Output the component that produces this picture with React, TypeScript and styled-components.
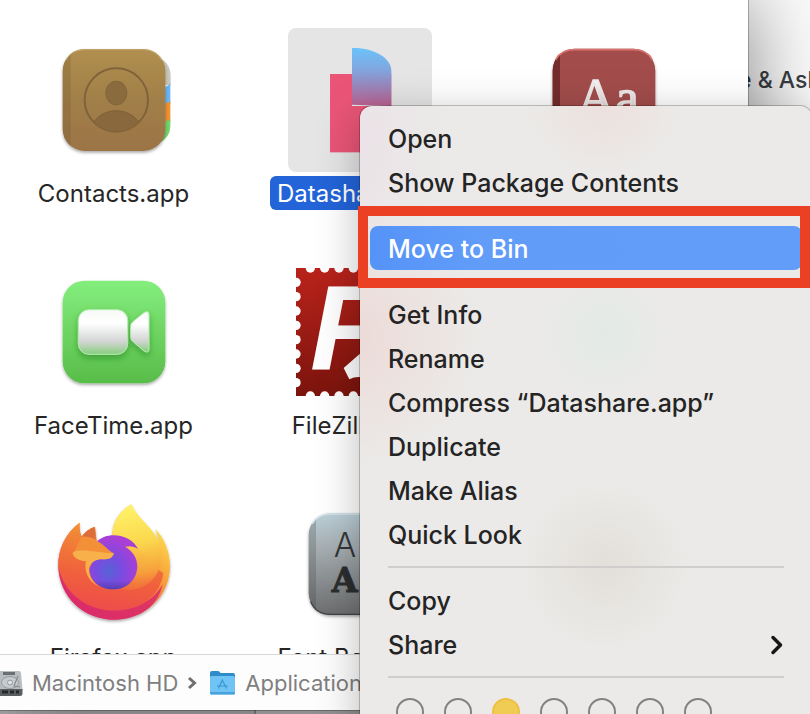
import React from "react";
import styled, { createGlobalStyle, css } from "styled-components";

const GlobalStyle = createGlobalStyle`
  * { box-sizing: border-box; }
  body {
    margin: 0;
    overflow: hidden;
    background: #f5f5f5;
    color: #262626;
    font-family: Inter, "Liberation Sans", sans-serif;
  }
  button {
    margin: 0;
    padding: 0;
    border: 0;
    background: none;
    color: inherit;
    font: inherit;
    text-align: left;
    cursor: default;
  }
`;

const Desktop = styled.main`
  position: relative;
  display: flex;
  height: 100vh;
  overflow: hidden;
`;

const FrontColumn = styled.div`
  position: relative;
  z-index: 1;
  flex: 1;
  min-width: 0;
  display: flex;
  flex-direction: column;
`;

const FinderWindow = styled.section`
  position: relative;
  flex: 1;
  min-height: 0;
  display: flex;
  flex-direction: column;
  background: #fff;
  box-shadow: 0 0 0 1px rgba(0, 0, 0, 0.25), 0 0 80px rgba(0, 0, 0, 0.5);
`;

const BackStrip = styled.div`
  display: flex;
  height: 4px;
  background: #bdbdbd;
`;

const BackStripPane = styled.div`
  width: 256px;
  border-right: 2px solid #8a8a8f;
  background: #b2b2b2;
`;

const BackWindow = styled.aside`
  width: 62px;
  overflow: hidden;
  background: #fcfcfc;
`;

const BackTitle = styled.p`
  margin: 64px 0 0 -10px;
  font-size: 23px;
  line-height: 32px;
  font-weight: 550;
  white-space: nowrap;
  color: #3b3f44;
`;

const IconGrid = styled.div`
  flex: 1;
  min-height: 0;
  overflow: hidden;
  display: grid;
  grid-template-columns: repeat(3, 1fr);
  grid-auto-rows: 232px;
  margin: 0 19px 0 -9px;
  padding-top: 28px;
`;

const FileButton = styled.button`
  display: flex;
  flex-direction: column;
  align-items: center;
  gap: 4px;
`;

const Tile = styled.span<{ $selected?: boolean }>`
  display: block;
  width: 144px;
  height: 144px;
  padding: 8px;
  border-radius: 8px;
  background: ${(p) => (p.$selected ? "#e5e5e5" : "transparent")};

  svg {
    display: block;
    width: 128px;
    height: 128px;
    overflow: visible;
  }
`;

const FileLabel = styled.span<{ $selected?: boolean }>`
  padding: 2px 8px 0 7px;
  border-radius: 6px;
  font-size: 24px;
  line-height: 32px;
  white-space: nowrap;
  ${(p) =>
    p.$selected &&
    css`
      background: #2364d9;
      color: #fff;
    `}
`;

const PathBar = styled.nav`
  display: flex;
  align-items: center;
  height: 56px;
  border-top: 1px solid #d9d9d9;
  background: #fdfdfd;
  color: #7f7f7f;
  overflow: hidden;
`;

const PathButton = styled.button`
  display: flex;
  align-items: center;
  gap: 9px;
  font-size: 22px;
  line-height: 32px;
  white-space: nowrap;

  svg { flex: none; }
`;

const PathChevron = styled.svg`
  flex: none;
  margin: 0 12px 0 9px;
`;

const ContextMenu = styled.div`
  position: absolute;
  z-index: 2;
  top: 106px;
  left: 360px;
  right: -2px;
  padding: 10px;
  border-radius: 12px;
  color: #242424;
  background:
    radial-gradient(circle at 244px -10px, rgba(240, 190, 185, 0.25), transparent 80px),
    radial-gradient(ellipse 130px 130px at -10px 230px, rgba(240, 180, 175, 0.3), transparent),
    radial-gradient(ellipse 110px 160px at -20px 30px, rgba(235, 205, 230, 0.3), transparent),
    radial-gradient(circle at 245px 228px, rgba(215, 235, 225, 0.4), transparent 64px),
    radial-gradient(circle at 245px 460px, rgba(205, 195, 180, 0.28), transparent 84px),
    #ebeae8;
  box-shadow: 0 0 0 1px rgba(0, 0, 0, 0.22), 0 10px 44px rgba(0, 0, 0, 0.28);
`;

const MenuItem = styled.button<{ $active?: boolean }>`
  display: flex;
  align-items: center;
  justify-content: space-between;
  width: 100%;
  height: 44px;
  padding: 2px 18px 0;
  border-radius: 8px;
  font-size: 25px;
  line-height: 32px;
  font-weight: 450;
  white-space: nowrap;
  ${(p) =>
    p.$active &&
    css`
      background: linear-gradient(90deg, #5593f7, #619cf9 25%, #639dfa);
      color: #fff;
      font-weight: 500;
    `}
`;

const Divider = styled.hr`
  height: 2px;
  margin: 10px 18px;
  border: 0;
  background: #cfcecc;
`;

const Spacer = styled.div`
  height: 22px;
`;

const Callout = styled.div`
  position: relative;

  &::after {
    content: "";
    position: absolute;
    inset: -20px -8px -18px -12px;
    border: 10px solid #ec4025;
    pointer-events: none;
  }
`;

const TagRow = styled.div`
  display: flex;
  gap: 20px;
  padding: 10px 26px;
`;

const TagButton = styled.button<{ $fill?: string; $ring: string }>`
  width: 28px;
  height: 28px;
  border: 2px solid ${(p) => p.$ring};
  border-radius: 50%;
  background: ${(p) => p.$fill ?? "transparent"};
`;

const ContactsIcon = () => (
  <svg viewBox="60 48 384 384" aria-hidden="true">
    <defs>
      <linearGradient id="ct-cover" x1="0" y1="0" x2="0" y2="1">
        <stop offset="0" stopColor="#b08f50" />
        <stop offset="0.5" stopColor="#a17f48" />
        <stop offset="1" stopColor="#9c7446" />
      </linearGradient>
      <filter id="soft" x="-20%" y="-20%" width="140%" height="140%">
        <feDropShadow dx="0" dy="5" stdDeviation="5" floodOpacity="0.35" />
      </filter>
      <clipPath id="ct-ring"><circle cx="259" cy="240" r="94" /></clipPath>
    </defs>
    <path d="M370 110 Q422 118 422 170 V196 H370Z" fill="#c9c6bd" />
    <path d="M370 200 Q415 206 421 188 V252 H370Z" fill="#69b4f5" />
    <path d="M370 250 Q415 254 421 242 V306 H370Z" fill="#f1912f" />
    <path d="M370 304 Q415 308 421 296 V320 Q420 350 390 368Z" fill="#72d46c" />
    <rect x="98" y="87" width="308" height="306" rx="66" fill="url(#ct-cover)" filter="url(#soft)" />
    <path d="M122 102 Q98 122 98 153 V327 Q98 360 122 379Z" fill="#6e522b" opacity="0.25" />
    <path d="M109 120 Q122 89 164 89 H340 Q378 89 396 122" fill="none" stroke="#c6a76b" strokeWidth="3" />
    <circle cx="259" cy="240" r="95" fill="none" stroke="#80633a" strokeWidth="6" />
    <ellipse cx="259" cy="219" rx="32" ry="36" fill="#8a6b3e" stroke="#7d6035" strokeWidth="2" />
    <ellipse cx="259" cy="340" rx="77" ry="68" fill="#8a683d" stroke="#7d6035" strokeWidth="3" clipPath="url(#ct-ring)" />
  </svg>
);

const DatashareIcon = () => (
  <svg viewBox="138 78 384 384" aria-hidden="true">
    <defs>
      <linearGradient id="ds-leaf" x1="0" y1="0" x2="0" y2="1">
        <stop offset="0" stopColor="#6bc3fb" />
        <stop offset="0.4" stopColor="#83a3dc" />
        <stop offset="1" stopColor="#b9608e" />
      </linearGradient>
    </defs>
    <rect x="240" y="192" width="184" height="235" fill="#ea5577" />
    <rect x="306" y="114" width="118" height="174" fill="#e5e5e5" />
    <path d="M306 114 C370 112 424 144 424 182 V288 L306 284Z" fill="url(#ds-leaf)" />
  </svg>
);

const DictionaryIcon = () => (
  <svg viewBox="66 108 384 384" aria-hidden="true">
    <defs>
      <linearGradient id="dc-ink" x1="0" y1="0" x2="0" y2="1">
        <stop offset="0" stopColor="#ffffff" />
        <stop offset="1" stopColor="#cfc8c6" />
      </linearGradient>
    </defs>
    <rect x="98" y="146" width="308" height="308" rx="66" fill="#a24e4c" filter="url(#soft)" />
    <path d="M120 162 Q98 182 98 212 V380 Q100 425 120 438Z" fill="#752b2c" />
    <path d="M107 180 Q122 149 164 149 H340 Q382 149 397 180" fill="none" stroke="#d87370" strokeWidth="5" />
    <text x="170" y="346" fontFamily="Liberation Serif, serif" fontSize="160" fill="url(#dc-ink)" stroke="#efeae8" strokeWidth="4">Aa</text>
  </svg>
);

const FaceTimeIcon = () => (
  <svg viewBox="60 24 384 384" aria-hidden="true">
    <defs>
      <linearGradient id="ft-bg" x1="0" y1="0" x2="0" y2="1">
        <stop offset="0" stopColor="#84ee7d" />
        <stop offset="1" stopColor="#58bc49" />
      </linearGradient>
      <linearGradient id="ft-cam" x1="0" y1="0" x2="0" y2="1">
        <stop offset="0" stopColor="#f6faf6" />
        <stop offset="0.3" stopColor="#ffffff" />
        <stop offset="0.72" stopColor="#d2d5d3" />
        <stop offset="1" stopColor="#86ce7c" />
      </linearGradient>
      <filter id="ft-shade" x="-30%" y="-30%" width="160%" height="180%">
        <feDropShadow dx="0" dy="10" stdDeviation="9" floodColor="#1d6d18" floodOpacity="0.45" />
      </filter>
    </defs>
    <rect x="98" y="62" width="308" height="308" rx="66" fill="url(#ft-bg)" filter="url(#soft)" />
    <g fill="url(#ft-cam)" stroke="#b5ecaf" strokeWidth="3" filter="url(#ft-shade)">
      <rect x="145" y="149" width="148" height="134" rx="32" />
      <path d="M302 200 Q302 190 310 184 L342 158 Q357 149 357 166 V266 Q357 282 342 273 L310 246 Q302 240 302 230Z" />
    </g>
  </svg>
);

const PERFORATIONS = [0, 1, 2, 3, 4, 5, 6, 7].map((i) => 97 + i * 43);

const FileZillaIcon = () => (
  <svg viewBox="108 54 384 384" aria-hidden="true">
    <defs>
      <linearGradient id="fz-bg" x1="0" y1="0" x2="0" y2="1">
        <stop offset="0" stopColor="#b9231b" />
        <stop offset="1" stopColor="#7b140d" />
      </linearGradient>
    </defs>
    <rect x="108" y="54" width="384" height="384" fill="url(#fz-bg)" />
    <g fill="#fff">
      {PERFORATIONS.map((p) => (
        <React.Fragment key={p}>
          <circle cx="108" cy={p} r="14" />
          <circle cx="492" cy={p} r="14" />
          <circle cx={p + 54} cy="54" r="14" />
          <circle cx={p + 54} cy="438" r="14" />
        </React.Fragment>
      ))}
      <text x="150" y="360" fontFamily="Liberation Sans, sans-serif" fontSize="364" fontWeight="700" fontStyle="italic">F</text>
      <path d="M310 302 L251 354 L268 388 Q288 378 310 383 L430 383 L440 340 L340 340 L420 250 L360 250Z" />
    </g>
  </svg>
);

const FirefoxIcon = () => (
  <svg viewBox="60 30 384 384" aria-hidden="true">
    <defs>
      <linearGradient id="ff-body" x1="0.9" y1="0.15" x2="0.25" y2="0.95">
        <stop offset="0" stopColor="#fde450" />
        <stop offset="0.3" stopColor="#f9a93c" />
        <stop offset="0.62" stopColor="#f3683b" />
        <stop offset="1" stopColor="#e8345d" />
      </linearGradient>
      <linearGradient id="ff-side" x1="0.5" y1="0" x2="0.3" y2="1">
        <stop offset="0" stopColor="#f29735" />
        <stop offset="0.6" stopColor="#f0613c" />
        <stop offset="1" stopColor="#ee4a4c" />
      </linearGradient>
      <linearGradient id="ff-flame" x1="0.4" y1="0" x2="0.5" y2="1">
        <stop offset="0" stopColor="#fff36a" />
        <stop offset="0.45" stopColor="#fbd84d" />
        <stop offset="0.8" stopColor="#f6a23b" />
        <stop offset="1" stopColor="#f16a3b" />
      </linearGradient>
      <linearGradient id="ff-curl" x1="0.4" y1="0" x2="0.4" y2="1">
        <stop offset="0" stopColor="#fbc94a" />
        <stop offset="0.6" stopColor="#f5a03b" />
        <stop offset="1" stopColor="#f0673b" />
      </linearGradient>
      <radialGradient id="ff-globe" cx="0.4" cy="0.66" r="0.6">
        <stop offset="0" stopColor="#5563d6" />
        <stop offset="0.45" stopColor="#7a4be0" />
        <stop offset="1" stopColor="#a83fd6" />
      </radialGradient>
      <linearGradient id="ff-low" x1="0" y1="0" x2="0" y2="1">
        <stop offset="0.6" stopColor="#3a3795" stopOpacity="0" />
        <stop offset="1" stopColor="#3a3795" stopOpacity="0.6" />
      </linearGradient>
    </defs>
    <path
      d="M149 98 C105 130 84 180 85 225 C87 320 160 389 252 389 C345 389 420 320 420 228 C420 185 402 140 375 117 C380 130 386 145 386 156 C360 105 330 95 303 43 C260 70 245 105 248 145 L200 155 L195 110 C180 115 165 125 155 140 C148 125 148 110 149 98Z"
      fill="url(#ff-body)"
      filter="url(#soft)"
    />
    <path
      d="M149 98 C105 130 84 180 85 228 C90 300 160 362 250 362 C330 362 390 320 400 250 L320 190 L200 155 L195 110 C180 115 165 125 155 140 C148 125 148 110 149 98Z"
      fill="url(#ff-side)"
    />
    <path d="M85 228 C98 306 170 362 250 362 C320 362 372 330 398 282 C386 345 330 389 252 389 C160 389 87 320 85 228Z" fill="#d82a6c" opacity="0.85" />
    <path d="M303 43 C262 70 242 105 248 150 L322 176 C365 215 350 275 285 299 C355 305 405 250 392 168 C372 112 330 95 303 43Z" fill="url(#ff-flame)" />
    <path d="M285 170 C330 164 356 200 352 232 C348 270 318 292 282 299 L250 298 V170Z" fill="url(#ff-curl)" />
    <path
      d="M200 155 C214 142 232 136 250 136 C285 136 312 152 324 177 C312 168 298 167 285 170 C310 184 322 205 322 230 C320 270 290 298 250 298 C208 298 178 270 178 236 L200 190Z"
      fill="url(#ff-globe)"
    />
    <path d="M322 230 C320 270 290 298 250 298 C208 298 178 270 178 236Z" fill="url(#ff-low)" />
    <path d="M155 140 C172 139 188 142 200 152 C222 162 234 182 252 190 L225 204 L130 190Z" fill="#f28f37" />
    <path d="M194 111 C178 116 165 127 155 140 C172 139 185 142 197 149Z" fill="#dc6e3d" />
    <path d="M128 188 C150 173 205 190 252 190 C246 208 234 209 212 208 C192 210 178 222 177 240 C178 262 192 282 210 290 C182 282 160 248 168 214 C148 212 130 204 128 188Z" fill="#f7b04a" />
  </svg>
);

const FontBookIcon = () => (
  <svg viewBox="138 30 384 384" aria-hidden="true">
    <defs>
      <linearGradient id="fb-bg" x1="0" y1="0" x2="0" y2="1">
        <stop offset="0" stopColor="#bcd0d9" />
        <stop offset="0.35" stopColor="#a6aeb1" />
        <stop offset="1" stopColor="#6c6d6e" />
      </linearGradient>
    </defs>
    <rect x="176" y="69" width="308" height="306" rx="66" fill="url(#fb-bg)" filter="url(#soft)" />
    <path d="M198 88 Q176 106 176 136 V310 Q177 340 198 360Z" fill="#404345" opacity="0.25" />
    <path d="M187 102 Q200 72 242 72 H420" fill="none" stroke="#d6e6ec" strokeWidth="4" />
    <path d="M182 335 Q198 373 242 373 H420" fill="none" stroke="#404244" strokeWidth="4" />
    <text x="251" y="200" fontFamily="Inter, sans-serif" fontSize="100" fontWeight="300" fill="#333739">A</text>
    <text x="245" y="306" fontFamily="DejaVu Serif, serif" fontSize="100" fontWeight="700" fill="#2b2d2e" stroke="#2b2d2e" strokeWidth="3">A</text>
  </svg>
);

const DiskIcon = () => (
  <svg width="23" height="28" viewBox="0 0 23 28" aria-hidden="true">
    <path d="M0 2 H19 Q21 2 21 4 L22.500 21 H0Z" fill="#b8bdc0" />
    <path d="M0 20 H22.500 V25 Q22.500 27 20 27 H0Z" fill="#5a5e60" />
    <path d="M2 23h6M10 23h4M16 23h3" stroke="#26292a" strokeWidth="3" />
    <rect x="3" y="3" width="12" height="3" fill="#6a6f73" />
    <ellipse cx="10" cy="13.500" rx="8.500" ry="6" fill="#c6ccce" stroke="#949a9d" />
    <circle cx="10" cy="13.500" r="2.500" fill="#dfe2e3" stroke="#949a9d" />
    <path d="M18 7 L14 17 L20 18" fill="none" stroke="#858b8f" strokeWidth="1.200" />
  </svg>
);

const FolderIcon = () => (
  <svg width="27" height="24" viewBox="0 0 27 24" aria-hidden="true">
    <path d="M1 2 Q1 0 3 0 H9 Q10.500 0 11.500 2 H24 Q26 2 26 4 V10 H1Z" fill="#2f8cc9" />
    <rect x="1" y="5" width="25" height="18.500" rx="1.500" fill="#6fc3f5" />
    <path d="M1 21h25v1q0 1.500-1.500 1.500h-22q-1.500 0-1.500-1.500Z" fill="#4aa2dc" />
    <path d="M13.500 8.500 L9.500 17.500 M13 8.500 L17.500 17.500 M8 15h11" stroke="#3b97d3" strokeWidth="1.200" fill="none" />
  </svg>
);

const FILES = [
  { name: "Contacts.app", Icon: ContactsIcon },
  { name: "Datashare.app", Icon: DatashareIcon, selected: true },
  { name: "Dictionary.app", Icon: DictionaryIcon },
  { name: "FaceTime.app", Icon: FaceTimeIcon },
  { name: "FileZilla.app", Icon: FileZillaIcon },
  null,
  { name: "Firefox.app", Icon: FirefoxIcon },
  { name: "Font Book.app", Icon: FontBookIcon },
];

const INFO_ACTIONS = [
  "Get Info",
  "Rename",
  "Compress “Datashare.app”",
  "Duplicate",
  "Make Alias",
  "Quick Look",
];

const TAGS = ["Red", "Orange", "Yellow", "Green", "Blue", "Purple", "Grey"];

export default function App() {
  return (
    <>
      <GlobalStyle />
      <Desktop>
        <FrontColumn>
          <FinderWindow aria-label="Applications">
            <IconGrid>
              {FILES.map((file, i) =>
                file ? (
                  <FileButton key={file.name}>
                    <Tile $selected={file.selected}>
                      <file.Icon />
                    </Tile>
                    <FileLabel $selected={file.selected}>{file.name}</FileLabel>
                  </FileButton>
                ) : (
                  <span key={i} />
                )
              )}
            </IconGrid>
            <PathBar aria-label="Path">
              <PathButton>
                <DiskIcon />
                Macintosh HD
              </PathButton>
              <PathChevron width="10" height="14" viewBox="0 0 10 14" aria-hidden="true">
                <path d="M2 2 L7.500 7 L2 12" fill="none" stroke="#6f6f6f" strokeWidth="3" />
              </PathChevron>
              <PathButton>
                <FolderIcon />
                Applications
              </PathButton>
            </PathBar>
          </FinderWindow>
          <BackStrip>
            <BackStripPane />
          </BackStrip>
        </FrontColumn>
        <BackWindow>
          <BackTitle>e &amp; Ash</BackTitle>
        </BackWindow>

        <ContextMenu role="menu" aria-label="Datashare.app">
          <MenuItem role="menuitem">Open</MenuItem>
          <MenuItem role="menuitem">Show Package Contents</MenuItem>
          <Spacer />
          <Callout>
            <MenuItem role="menuitem" $active>
              Move to Bin
            </MenuItem>
          </Callout>
          <Spacer />
          {INFO_ACTIONS.map((label) => (
            <MenuItem role="menuitem" key={label}>
              {label}
            </MenuItem>
          ))}
          <Divider />
          <MenuItem role="menuitem">Copy</MenuItem>
          <MenuItem role="menuitem" aria-haspopup="menu">
            Share
            <svg width="14" height="20" viewBox="0 0 14 20" aria-hidden="true">
              <path d="M3 2.500 L10.500 10 L3 17.500" fill="none" stroke="#161616" strokeWidth="3.500" strokeLinecap="round" strokeLinejoin="round" />
            </svg>
          </MenuItem>
          <Divider />
          <TagRow>
            {TAGS.map((tag) => (
              <TagButton
                key={tag}
                aria-label={tag}
                $ring={tag === "Yellow" ? "#eec043" : "#838281"}
                $fill={tag === "Yellow" ? "#f0cc55" : undefined}
              />
            ))}
          </TagRow>
        </ContextMenu>
      </Desktop>
    </>
  );
}
